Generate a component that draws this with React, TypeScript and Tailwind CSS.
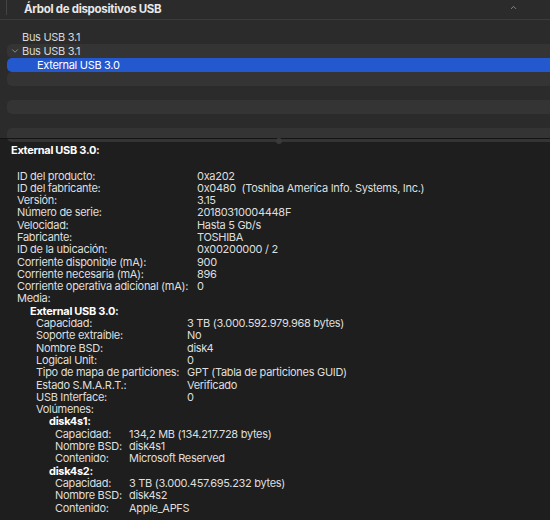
import { ChevronDown, ChevronUp } from 'lucide-react';

type Row = { label: string; value?: string; bold?: boolean; indent: number; col?: number };

const rows: Row[] = [
  { label: 'ID del producto:', value: '0xa202', indent: 17, col: 197 },
  { label: 'ID del fabricante:', value: '0x0480  (Toshiba America Info. Systems, Inc.)', indent: 17, col: 197 },
  { label: 'Versión:', value: '3.15', indent: 17, col: 197 },
  { label: 'Número de serie:', value: '20180310004448F', indent: 17, col: 197 },
  { label: 'Velocidad:', value: 'Hasta 5 Gb/s', indent: 17, col: 197 },
  { label: 'Fabricante:', value: 'TOSHIBA', indent: 17, col: 197 },
  { label: 'ID de la ubicación:', value: '0x00200000 / 2', indent: 17, col: 197 },
  { label: 'Corriente disponible (mA):', value: '900', indent: 17, col: 197 },
  { label: 'Corriente necesaria (mA):', value: '896', indent: 17, col: 197 },
  { label: 'Corriente operativa adicional (mA):', value: '0', indent: 17, col: 197 },
  { label: 'Media:', indent: 17 },
  { label: 'External USB 3.0:', bold: true, indent: 30 },
  { label: 'Capacidad:', value: '3 TB (3.000.592.979.968 bytes)', indent: 36, col: 187 },
  { label: 'Soporte extraíble:', value: 'No', indent: 36, col: 187 },
  { label: 'Nombre BSD:', value: 'disk4', indent: 36, col: 187 },
  { label: 'Logical Unit:', value: '0', indent: 36, col: 187 },
  { label: 'Tipo de mapa de particiones:', value: 'GPT (Tabla de particiones GUID)', indent: 36, col: 187 },
  { label: 'Estado S.M.A.R.T.:', value: 'Verificado', indent: 36, col: 187 },
  { label: 'USB Interface:', value: '0', indent: 36, col: 187 },
  { label: 'Volúmenes:', indent: 36 },
  { label: 'disk4s1:', bold: true, indent: 49 },
  { label: 'Capacidad:', value: '134,2 MB (134.217.728 bytes)', indent: 55, col: 129 },
  { label: 'Nombre BSD:', value: 'disk4s1', indent: 55, col: 129 },
  { label: 'Contenido:', value: 'Microsoft Reserved', indent: 55, col: 129 },
  { label: 'disk4s2:', bold: true, indent: 49 },
  { label: 'Capacidad:', value: '3 TB (3.000.457.695.232 bytes)', indent: 55, col: 129 },
  { label: 'Nombre BSD:', value: 'disk4s2', indent: 55, col: 129 },
  { label: 'Contenido:', value: 'Apple_APFS', indent: 55, col: 129 },
];

const DetailRow = ({ row }: { row: Row }) => (
  <div className="flex h-[12.3px] whitespace-pre leading-[12.3px]">
    <span
      className={row.bold ? 'shrink-0 font-bold text-white' : 'shrink-0 text-[#dedede]'}
      style={{ marginLeft: row.indent, width: row.col ? row.col - row.indent : undefined }}
    >
      {row.label}
    </span>
    {row.value && <span className="text-[#dedede]">{row.value}</span>}
  </div>
);

export default function App() {
  return (
    <div className="flex h-[520px] w-[550px] flex-col overflow-hidden bg-[#1e1e1e] text-[11px] tracking-[-0.3px] font-['Inter','Liberation_Sans',sans-serif]">
      <div className="flex h-[138px] shrink-0 flex-col bg-[#2b2b2b]">
        <div className="flex h-[20px] shrink-0 items-center border-b border-[#3c3c3c]">
          <div className="ml-[6px] h-[15px] self-start w-px bg-[#444444]" />
          <span className="ml-[17px] text-[11.5px] font-bold text-[#e8e8e8]">Árbol de dispositivos USB</span>
          <ChevronUp className="ml-auto mr-[32px] -mt-[5px] size-[9px] text-[#8a8a8a]" strokeWidth={2.5} />
        </div>
        <div className="mt-[10px] flex flex-col pl-[7px]">
          <div className="flex h-[14px] items-center pl-[15px] text-[#d8d8d8]">Bus USB 3.1</div>
          <div className="flex h-[14px] items-center rounded-l-[5px] bg-[#343434] text-[#d8d8d8]">
            <ChevronDown className="ml-[3px] mr-[2px] size-[10px] text-[#9a9a9a]" strokeWidth={2} />
            Bus USB 3.1
          </div>
          <div className="flex h-[14px] items-center rounded-l-[5px] bg-[#2358cf] pl-[30px] text-white">
            External USB 3.0
          </div>
          <div className="h-[14px] rounded-l-[5px] bg-[#343434]" />
          <div className="h-[14px]" />
          <div className="h-[14px] rounded-l-[5px] bg-[#343434]" />
          <div className="h-[14px]" />
          <div className="h-[14px] rounded-l-[5px] bg-[#343434]" />
        </div>
      </div>
      <div className="relative h-px shrink-0 bg-[#141414]">
        <div className="absolute left-[276px] top-[0px] size-[6px] rounded-full bg-[#3a3a3a]" />
      </div>
      <div className="flex flex-col pt-[3px]">
        <div className="ml-[11px] text-[11px] font-bold text-white">External USB 3.0:</div>
        <div className="mt-[11px] flex flex-col">
          {rows.map((r, i) => (
            <DetailRow key={i} row={r} />
          ))}
        </div>
      </div>
    </div>
  );
}
